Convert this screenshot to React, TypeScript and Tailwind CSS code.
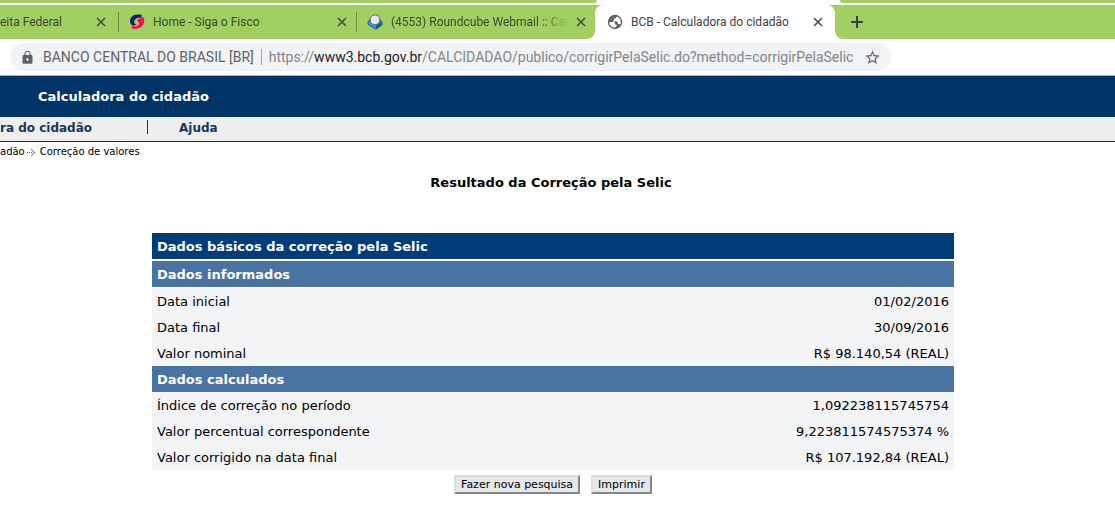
import { MdLock, MdStarBorder } from 'react-icons/md';
import type { ReactNode } from 'react';

interface TabProps {
    title: string;
    icon?: ReactNode;
    fade?: boolean;
    active?: boolean;
}

interface Row {
    label: string;
    value: string;
}

const informedRows: Row[] = [
    { label: 'Data inicial', value: '01/02/2016' },
    { label: 'Data final', value: '30/09/2016' },
    { label: 'Valor nominal', value: 'R$ 98.140,54 (REAL)' },
];

const calculatedRows: Row[] = [
    { label: 'Índice de correção no período', value: '1,092238115745754' },
    { label: 'Valor percentual correspondente', value: '9,223811574575374 %' },
    { label: 'Valor corrigido na data final', value: 'R$ 107.192,84 (REAL)' },
];

function FiscoIcon() {
    return (
        <svg viewBox="0 0 16 16" className="size-4 shrink-0" aria-hidden="true">
            <path d="M13 1C8-.2 3.500.8 1.800 4 .3 7 1 10.500 3.500 11.500c1.500.5 3 0 3.800-.8C5.800 10 4.500 8.500 5.500 6.500 6.500 4.200 9.500 3.800 12 4z" fill="#14206e" />
            <path d="M13.800 2.800c2 2 2 6-.2 8.700-2.600 3.300-7.400 4-11 3l.3-2.500c3 .8 5.800.2 6.800-2 .6-1.600-1.600-2.200-1.300-3.800C8.800 4.500 11.500 4.500 13.800 2.800z" fill="#f5114b" />
            <path d="M11.500 4.300C9 3.800 6.500 4.800 7 6.700c.4 1.500 3 1.600 2.300 3.400-.6 1.300-2.300 1.700-4 1.500" fill="none" stroke="#e3a9b4" strokeWidth="1" />
        </svg>
    );
}

function RoundcubeIcon() {
    return (
        <svg viewBox="0 0 16 16" className="size-4 shrink-0" aria-hidden="true">
            <path d="M1 7.500L4.500 5h7L15.300 8l-.5 3L9 15.300 1 10.500z" fill="#2382c8" stroke="#1c4a6c" strokeWidth=".8" />
            <circle cx="8" cy="5.800" r="4.900" fill="#e4e9ed" stroke="#4d575f" strokeWidth=".9" />
            <path d="M3.300 7.500c1.500 3.600 7.500 4 9.500 0L9.300 10.800z" fill="#c2ccd4" />
            <path d="M1.200 8L9 11.500v3.300l-7.500-4.500z" fill="#2f9ade" />
            <path d="M9 11.500L15 8l-.5 2.800L9 14.800z" fill="#145b98" />
        </svg>
    );
}

function GlobeIcon() {
    return (
        <svg viewBox="0 0 16 16" className="size-4 shrink-0" aria-hidden="true">
            <circle cx="8" cy="8" r="7.200" fill="#5f6368" />
            <path d="M2.300 8h4.200c1 0 1.500.6 1.500 1.500v1h1.500V12L8 13.700C4.700 13.700 2.300 11.200 2.300 8zM9.500 2.500v.8c0 .7-.6 1.200-1.300 1.200H7v1.300c0 .7-.5 1-1.200 1v.7h4c.7 0 1 .4 1 1V10h1.400l1 .5c1.500-3 .3-7-3.700-8z" fill="#fff" />
        </svg>
    );
}

function CloseButton() {
    return (
        <button type="button" aria-label="Fechar guia" className="shrink-0">
            <svg viewBox="0 0 10 10" className="size-2.5" aria-hidden="true">
                <path d="M1 1l8 8M9 1L1 9" stroke="#46503c" strokeWidth="1.600" />
            </svg>
        </button>
    );
}

function Tab({ title, icon, fade, active }: TabProps) {
    return (
        <div className={active ? 'flex w-[240px] items-center gap-2 px-3' : 'flex w-[238px] items-center gap-2 px-2.5'}>
            {icon}
            <span
                className={
                    fade
                        ? 'flex-1 whitespace-nowrap [mask-image:linear-gradient(to_right,#000_85%,transparent)]'
                        : 'flex-1 whitespace-nowrap'
                }
            >
                {title}
            </span>
            <CloseButton />
        </div>
    );
}

function TabStrip() {
    return (
        <div className="bg-white font-[Roboto,'Open_Sans',sans-serif] text-xs text-[#3c4a2c]">
            <div className="flex h-[3px]">
                <div className="w-[597px] rounded-br bg-[#a2cf61]" />
                <div className="w-[243px]" />
                <div className="flex-1 rounded-bl bg-[#a2cf61]" />
            </div>
            <div className="mt-0.5 flex h-[34px]">
                <div className="flex rounded-br-lg bg-[#a2cf61]">
                    <div className="flex w-[118px] items-center justify-between pr-3">
                        <span>eita Federal</span>
                        <CloseButton />
                    </div>
                    <div className="my-[7px] w-px bg-[#6f8b46]" />
                    <Tab title="Home - Siga o Fisco" icon={<FiscoIcon />} />
                    <div className="my-[7px] -ml-px w-px bg-[#6f8b46]" />
                    <Tab title="(4553) Roundcube Webmail :: Cai" icon={<RoundcubeIcon />} fade />
                </div>
                <div className="bg-[#a2cf61]">
                    <div className="flex h-full rounded-t-lg bg-white text-[#3c4043]">
                        <Tab title="BCB - Calculadora do cidadão" icon={<GlobeIcon />} active />
                    </div>
                </div>
                <div className="flex flex-1 items-center rounded-bl-lg bg-[#a2cf61] pl-4">
                    <button type="button" aria-label="Nova guia">
                        <svg viewBox="0 0 12 12" className="size-3" aria-hidden="true">
                            <path d="M6 0v12M0 6h12" stroke="#3c4043" strokeWidth="2" />
                        </svg>
                    </button>
                </div>
            </div>
        </div>
    );
}

function AddressBar() {
    return (
        <div className="flex border-b border-[#b6b4b6] bg-white py-1 pl-2.5 font-[Roboto,'Open_Sans',sans-serif] text-sm">
            <div className="flex h-7 w-[881px] items-center rounded-full bg-[#f1f3f4] px-2.5 whitespace-nowrap text-[#5f6368]">
                <MdLock size={15} className="shrink-0" />
                <span className="ml-2">BANCO CENTRAL DO BRASIL [BR]</span>
                <span className="mx-[7px] h-4 w-px shrink-0 bg-[#9aa0a6]" />
                <span className="flex-1 text-[#80868b]">
                    https://<span className="text-[#202124]">www3.bcb.gov.br</span>
                    /CALCIDADAO/publico/corrigirPelaSelic.do?method=corrigirPelaSelic
                </span>
                <button type="button" aria-label="Adicionar aos favoritos">
                    <MdStarBorder size={17} />
                </button>
            </div>
        </div>
    );
}

function SectionHead({ title, divided }: { title: string; divided?: boolean }) {
    return (
        <tr className={divided ? 'h-[27px] text-white' : 'h-[26px] text-white'}>
            <th
                colSpan={2}
                className={
                    divided
                        ? 'border-b border-white bg-[#4a73a1] bg-clip-padding px-[5px] pt-0.5 text-left'
                        : 'bg-[#4a73a1] px-[5px] pt-0.5 text-left'
                }
            >
                {title}
            </th>
        </tr>
    );
}

function DataRows({ rows }: { rows: Row[] }) {
    return rows.map((row) => (
        <tr key={row.label} className="h-[26px] bg-[#f2f4f6]">
            <th scope="row" className="px-[5px] pt-0.5 text-left font-normal">{row.label}</th>
            <td className="px-[5px] pt-0.5 text-right">{row.value}</td>
        </tr>
    ));
}

const buttonClass =
    'h-[19px] border-2 border-t-[#dcdcdc] border-r-[#868686] border-b-[#868686] border-l-[#dcdcdc] bg-[#e4e8ed] px-[5px] text-[11px] leading-4';

export default function App() {
    return (
        <div className="overflow-hidden bg-white">
            <TabStrip />
            <AddressBar />
            <div className="font-[Verdana,'DejaVu_Sans',sans-serif] text-[13px] leading-4 text-black">
                <header className="flex h-[41px] items-center bg-[#003366] pl-[38px] font-bold text-white">
                    Calculadora do cidadão
                </header>
                <nav className="flex h-[25px] items-start border-b border-[#003366] bg-[#eeeeee] pt-[3px] text-xs font-bold text-[#17365f]">
                    <a href="#calculadora" className="whitespace-nowrap">ra do cidadão</a>
                    <span className="ml-[55px] h-3.5 w-px bg-[#003366]" />
                    <a href="#ajuda" className="ml-[31px]">Ajuda</a>
                </nav>
                <div className="flex h-5 items-center text-[10px]">
                    <a href="#cidadao">adão</a>
                    <svg viewBox="0 0 9 7" className="mr-1 ml-0.5 h-[7px] w-[9px]" aria-hidden="true">
                        <path d="M0 3h1v1H0zM2 3h1v1H2zM4 3h1v1H4zM4 0h1v1H4zM5 1h1v1H5zM6 2h1v1H6zM7 3h1v1H7zM6 4h1v1H6zM5 5h1v1H5zM4 6h1v1H4z" fill="#3f62a8" />
                    </svg>
                    <span>Correção de valores</span>
                </div>
                <main className="mr-[9px] px-4 pt-[13px]">
                    <h1 className="mr-1 text-center font-bold">Resultado da Correção pela Selic</h1>
                    <table className="mx-auto mt-[42px] w-full max-w-[802px] border-separate border-spacing-0">
                        <thead>
                            <tr className="h-7 text-white">
                                <th colSpan={2} className="border-b-2 border-white bg-[#003c78] bg-clip-padding px-[5px] pt-0.5 text-left">
                                    Dados básicos da correção pela Selic
                                </th>
                            </tr>
                        </thead>
                        <tbody>
                            <SectionHead title="Dados informados" divided />
                            <DataRows rows={informedRows} />
                            <SectionHead title="Dados calculados" />
                            <DataRows rows={calculatedRows} />
                        </tbody>
                    </table>
                    <div className="mt-[5px] flex justify-center gap-[11px]">
                        <button type="button" className={buttonClass}>Fazer nova pesquisa</button>
                        <button type="button" className={buttonClass}>Imprimir</button>
                    </div>
                </main>
            </div>
        </div>
    );
}
